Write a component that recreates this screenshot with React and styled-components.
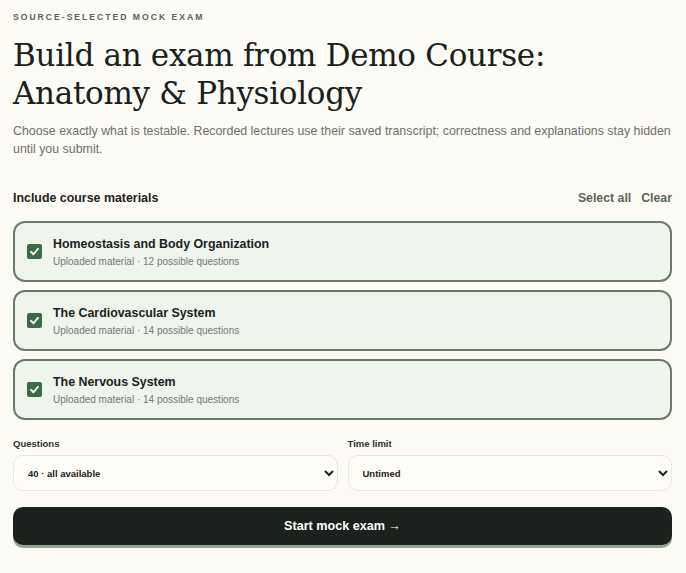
import { useState } from 'react'
import styled, { createGlobalStyle } from 'styled-components'

const materials = [
	{ id: 1, title: 'Homeostasis and Body Organization', count: 12 },
	{ id: 2, title: 'The Cardiovascular System', count: 14 },
	{ id: 3, title: 'The Nervous System', count: 14 },
]

const App = () => {
	const [checked, setChecked] = useState([1, 2, 3])

	const toggle = (id) => {
		setChecked((prev) => (prev.includes(id) ? prev.filter((x) => x !== id) : [...prev, id]))
	}

	return (
		<Page>
			<GlobalStyle />
			<Eyebrow>Source-selected mock exam</Eyebrow>
			<Title>
				Build an exam from Demo Course:
				<br />
				Anatomy &amp; Physiology
			</Title>
			<Lead>
				Choose exactly what is testable. Recorded lectures use their saved transcript; correctness and
				explanations stay hidden until you submit.
			</Lead>

			<SectionHead>
				<SectionTitle>Include course materials</SectionTitle>
				<Links>
					<LinkButton onClick={() => setChecked(materials.map((m) => m.id))}>Select all</LinkButton>
					<LinkButton onClick={() => setChecked([])}>Clear</LinkButton>
				</Links>
			</SectionHead>

			<List>
				{materials.map((m) => (
					<Card key={m.id} $on={checked.includes(m.id)} onClick={() => toggle(m.id)}>
						<Box $on={checked.includes(m.id)}>
							{checked.includes(m.id) && (
								<svg width='11' height='11' viewBox='0 0 12 12'>
									<path d='M2.2 6.4 L4.9 9 L9.8 3.2' fill='none' stroke='#fff' strokeWidth='2.1' strokeLinecap='round' strokeLinejoin='round' />
								</svg>
							)}
						</Box>
						<CardText>
							<CardTitle>{m.title}</CardTitle>
							<CardMeta>Uploaded material · {m.count} possible questions</CardMeta>
						</CardText>
					</Card>
				))}
			</List>

			<Fields>
				<Field>
					<FieldLabel>Questions</FieldLabel>
					<Select defaultValue='40'>
						<option value='40'>40 · all available</option>
						<option value='20'>20</option>
						<option value='10'>10</option>
					</Select>
				</Field>
				<Field>
					<FieldLabel>Time limit</FieldLabel>
					<Select defaultValue='untimed'>
						<option value='untimed'>Untimed</option>
						<option value='30'>30 minutes</option>
						<option value='60'>60 minutes</option>
					</Select>
				</Field>
			</Fields>

			<StartButton>Start mock exam →</StartButton>
		</Page>
	)
}

const GlobalStyle = createGlobalStyle`
	html, body {
		margin: 0;
		background: #fcfbf5;
	}
	body {
		font-family: 'Liberation Sans', Arial, sans-serif;
		color: #1c221e;
	}
`

const Page = styled.div`
	padding: 11px 14px 20px 13px;
	display: flex;
	flex-direction: column;
`

const Eyebrow = styled.div`
	font-size: 8.6px;
	font-weight: 800;
	letter-spacing: 2px;
	text-transform: uppercase;
	color: #5a625b;
	line-height: 12px;
`

const Title = styled.h1`
	margin: 13px 0 0;
	font-family: 'DejaVu Serif', Georgia, serif;
	font-weight: 400;
	font-size: 31px;
	line-height: 38px;
	letter-spacing: -0.3px;
	color: #18211c;
`

const Lead = styled.p`
	margin: 10px 0 0;
	font-size: 12.4px;
	line-height: 18px;
	color: #6e716c;
`

const SectionHead = styled.div`
	margin-top: 33px;
	display: flex;
	align-items: center;
	justify-content: space-between;
`

const SectionTitle = styled.div`
	font-size: 12.4px;
	font-weight: 700;
	color: #1c221e;
`

const Links = styled.div`
	display: flex;
	gap: 10px;
`

const LinkButton = styled.button`
	border: none;
	background: none;
	padding: 0;
	font-family: inherit;
	font-size: 12.3px;
	font-weight: 700;
	color: #5b6657;
	cursor: pointer;
`

const List = styled.div`
	margin-top: 16px;
	display: flex;
	flex-direction: column;
	gap: 8px;
`

const Card = styled.div`
	height: 61px;
	box-sizing: border-box;
	display: flex;
	align-items: center;
	gap: 11px;
	padding: 0 12px;
	border: 2px solid ${(p) => (p.$on ? '#6c7a6c' : '#dcdad2')};
	border-radius: 12px;
	background: ${(p) => (p.$on ? '#eff4ec' : '#fffdf8')};
	cursor: pointer;
`

const Box = styled.div`
	width: 15px;
	height: 15px;
	flex-shrink: 0;
	border-radius: 2px;
	display: flex;
	align-items: center;
	justify-content: center;
	background: ${(p) => (p.$on ? '#3c6b47' : '#fff')};
	border: ${(p) => (p.$on ? 'none' : '1px solid #8a918a')};
`

const CardText = styled.div`
	display: flex;
	flex-direction: column;
	gap: 5px;
`

const CardTitle = styled.div`
	font-size: 12.4px;
	font-weight: 700;
	color: #1c221e;
`

const CardMeta = styled.div`
	font-size: 10px;
	color: #747a73;
`

const Fields = styled.div`
	margin-top: 18px;
	display: grid;
	grid-template-columns: 1fr 1fr;
	gap: 10px;
`

const Field = styled.label`
	display: flex;
	flex-direction: column;
	gap: 6px;
`

const FieldLabel = styled.span`
	font-size: 9.5px;
	font-weight: 700;
	color: #2c322e;
`

const Select = styled.select`
	height: 36px;
	padding: 0 8px 0 10px;
	border: 1px solid #ebe8e0;
	border-radius: 10px;
	background: #fffdf8;
	font-family: 'Liberation Sans', Arial, sans-serif;
	font-size: 9.5px;
	font-weight: 600;
	color: #1c221e;
	outline: none;
`

const StartButton = styled.button`
	margin-top: 16px;
	height: 38px;
	border: none;
	border-radius: 10px;
	background: #1b221e;
	box-shadow: 0 3px 0 #93a491;
	color: #fff;
	font-family: 'Liberation Sans', Arial, sans-serif;
	font-size: 12.6px;
	font-weight: 700;
	cursor: pointer;
`

export default App
